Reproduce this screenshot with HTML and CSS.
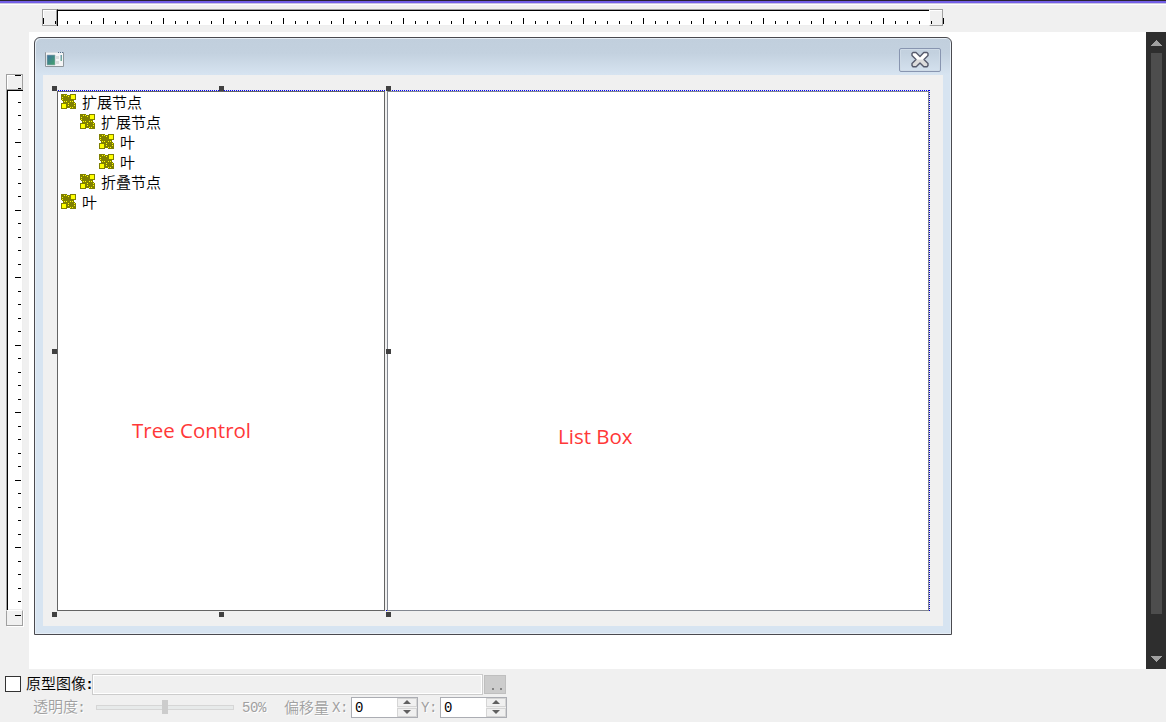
FILE: index.html
```html
<!DOCTYPE html>
<html lang="zh">
<head>
<meta charset="utf-8">
<title>Dialog Editor</title>
<link rel="stylesheet" href="styles.css">
</head>
<body>
<svg class="defs" width="0" height="0">
  <symbol id="node" viewBox="0 0 15 15">
    <path fill="#808000" d="M0 0h6v1h3V0h6v6h-2v2h1v1h1v6H9v-1H6v1H0V9h2V7H1V6H0z"/>
    <path fill="#ff0" d="M10 1h4v4h-4zM1 10h4v4H1zM3 1h1v1H3zM5 1h1v1H5zM1 3h1v1H1zM7 2h1v1H7zM1 5h1v1H1zM3 7h1v1H3zM5 7h1v1H5zM9 7h1v1H9zM11 7h1v1h-1zM7 9h1v1H7zM13 9h1v1h-1zM7 11h1v1H7zM13 11h1v1h-1zM9 13h1v1H9zM11 13h1v1h-1z"/>
  </symbol>
</svg>
<div class="editor">
  <div class="accent"></div>
  <div class="ruler-top">
    <div class="cap-left"></div><div class="track-h"></div><div class="cap-right"></div>
    <svg class="ticks-h" width="902" height="17" shape-rendering="crispEdges"><path d="M1 13.5H902" stroke="#000" stroke-width="3" stroke-dasharray="1 11"/><path d="M1 12H902" stroke="#000" stroke-width="6" stroke-dasharray="1 59"/></svg>
  </div>
  <div class="middle">
    <div class="ruler-left">
      <div class="cap-top"></div><div class="track-v"></div><div class="cap-bottom"></div>
      <svg class="ticks-v" width="17" height="552" shape-rendering="crispEdges"><path d="M14.5 1V541" stroke="#000" stroke-width="3" stroke-dasharray="1 12 1 13"/><path d="M13 1V548" stroke="#000" stroke-width="6" stroke-dasharray="1 66 1 67"/></svg>
    </div>
    <div class="canvas">
      <div class="dialog">
        <div class="titlebar">
          <svg class="app-icon" width="19" height="16" viewBox="0 0 19 16">
            <defs><linearGradient id="pic" x2="1" y2="1"><stop offset="0" stop-color="#3d6f9f"/><stop offset="1" stop-color="#43a56a"/></linearGradient></defs>
            <path d="M.5 .5h18v14H.5z" fill="#f4f5f6" stroke="#8f969c"/><path d="M1 .5h17" stroke="#d5dce2"/><path d="M13 .5h1m1 0h1m1 0h1" stroke="#526f8c"/>
            <path d="M2 3h8v10H2z" fill="url(#pic)" stroke="#9aabb6" stroke-width=".6"/><path d="M11 4h3v3h-3zM11 9h3v3h-3z" fill="#d9dcdd"/><path d="M15.5 3H17v6h-1.500z" fill="url(#pic)" opacity=".75"/>
          </svg>
          <div class="close"><svg width="20" height="18" viewBox="0 0 20 18"><defs><linearGradient id="cross" x2="0" y2="1"><stop offset=".45" stop-color="#fff"/><stop offset=".55" stop-color="#dcdcdc"/></linearGradient></defs><path d="M3 1.500h3L10 5.400l3.800-3.900H17l1 1v2L14 8.500l4 4v2l-1 1.200h-3.200L10 12l-3.800 3.700H3l-1-1.200v-2l4-4-4-4v-2z" fill="url(#cross)" stroke="#555a6c" stroke-width="1.400" stroke-linejoin="round"/></svg></div>
        </div>
        <div class="client">
          <div class="tree">
            <div class="row"><svg class="node"><use href="#node"/></svg><span>扩展节点</span></div>
            <div class="row level-1"><svg class="node"><use href="#node"/></svg><span>扩展节点</span></div>
            <div class="row level-2"><svg class="node"><use href="#node"/></svg><span>叶</span></div>
            <div class="row level-2"><svg class="node"><use href="#node"/></svg><span>叶</span></div>
            <div class="row level-1"><svg class="node"><use href="#node"/></svg><span>折叠节点</span></div>
            <div class="row"><svg class="node"><use href="#node"/></svg><span>叶</span></div>
            <span class="note note-tree">Tree Control</span>
          </div>
          <div class="list"><span class="note note-list">List Box</span></div>
          <svg class="selection" width="882" height="540" shape-rendering="crispEdges">
            <path d="M6 4.500H878" stroke="#00f" stroke-dasharray="1 1"/><path d="M877.500 4V525" stroke="#00c" stroke-dasharray="1 1"/><path d="M334 524.500h1" stroke="#00f"/>
            <path fill="#404040" d="M0 0h5v5H0zM167 0h5v5h-5zM334 0h5v5h-5zM0 263h5v5H0zM334 263h5v5h-5zM0 526h5v5H0zM167 526h5v5h-5zM334 526h5v5h-5z"/>
          </svg>
        </div>
      </div>
    </div>
    <div class="scrollbar">
      <svg width="11" height="6" shape-rendering="crispEdges"><path d="M5.500 0L11 6H0z" fill="#a0a0a0"/></svg>
      <div class="thumb"></div>
      <svg width="11" height="6" shape-rendering="crispEdges"><path d="M0 0h11L5.500 6z" fill="#a0a0a0"/></svg>
    </div>
  </div>
  <div class="options">
    <div class="line line-image">
      <span class="checkbox"></span><span class="label">原型图像<i class="colon">:</i></span><span class="path"></span><span class="browse"><b></b><b></b></span>
    </div>
    <div class="line line-opacity">
      <span class="dim opacity">透明度<i class="colon">:</i></span>
      <span class="slider"><span class="knob"></span></span>
      <span class="dim latin percent">50%</span>
      <span class="dim offset">偏移量</span><span class="dim latin x-label">X:</span>
      <span class="spin"><span class="latin">0</span><span class="arrows"><span><svg width="8" height="4"><path d="M4 0l4 4H0z"/></svg></span><span><svg width="8" height="4"><path d="M0 0h8L4 4z"/></svg></span></span></span>
      <span class="dim latin y-label">Y:</span>
      <span class="spin"><span class="latin">0</span><span class="arrows"><span><svg width="8" height="4"><path d="M4 0l4 4H0z"/></svg></span><span><svg width="8" height="4"><path d="M0 0h8L4 4z"/></svg></span></span></span>
    </div>
  </div>
</div>
</body>
</html>
```
FILE: styles.css
```css
* { box-sizing: border-box; }
body { margin: 0; background: #f0f0f0; color: #000; font: 350 15px/20px "Noto Sans CJK SC", sans-serif; overflow: hidden; }
svg { display: block; flex: none; }
.defs { position: absolute; }
.editor { width: 1166px; height: 722px; display: grid; grid-template-rows: 4px 28px 637px 53px; }
.accent { background: linear-gradient(#282334 0 1px, #735fe6 1px 3px, #c9c6e0 3px 4px); }

.ruler-top { position: relative; display: flex; height: 22px; padding: 4px 0 0 42px; border-top: 1px solid #fff; }
.cap-left { width: 15px; height: 17px; border: 1px solid #a0a0a0; box-shadow: inset 1px 1px #fff; }
.track-h { width: 872px; height: 17px; background: #fff; border-top: 1px solid #a0a0a0; border-left: 1px solid #000; box-shadow: inset 0 1px #000, inset 0 -1px #eee; }
.cap-right { width: 14px; height: 17px; border: 1px solid #a0a0a0; border-left-color: #fff; box-shadow: inset 0 1px #fff; }
.ticks-h { position: absolute; left: 42px; top: 4px; }

.middle { display: grid; grid-template-columns: 29px 1117px 20px; }
.ruler-left { position: relative; padding: 42px 0 0 6px; }
.cap-top { width: 17px; height: 16px; border: 1px solid #a0a0a0; box-shadow: inset 1px 1px #fff; }
.track-v { width: 17px; height: 520px; background: #fff; border-left: 1px solid #a0a0a0; box-shadow: inset 1px 1px #000, inset -1px -1px #eee; }
.cap-bottom { width: 17px; height: 16px; border: 1px solid #a0a0a0; border-top-color: #fff; box-shadow: 1px 1px #fff; }
.ticks-v { position: absolute; left: 5px; top: 42px; }

.canvas { background: #fff; padding: 5px 0 0 5px; }
.dialog { width: 918px; height: 598px; padding: 0 8px; border: 1px solid #4a4a4f; border-radius: 6px 6px 0 0; background: linear-gradient(#c1cfdd 0, #c3d1df 15px, #d7e4f1 37px); box-shadow: inset 1px 1px #e6eef6, inset -1px -1px #e6eef6; }
.titlebar { height: 37px; display: flex; justify-content: space-between; align-items: flex-start; padding: 10px 2px 0; }
.app-icon { margin-top: 4px; }
.close { width: 42px; height: 24px; display: flex; align-items: center; justify-content: center; border: 1px solid #8895b0; border-radius: 2px; box-shadow: inset 0 0 0 1px #cfdbe7; }
.client { position: relative; height: 551px; display: flex; gap: 2px; padding: 16px 0 0 14px; background: #f0f0f0; }
.tree { position: relative; width: 328px; height: 520px; background: #fff; border: 1px solid #646464; padding: 0 3px; }
.list { position: relative; width: 542px; height: 520px; background: #fff; border: 1px solid #828790; }
.row { height: 20px; display: flex; align-items: center; gap: 6px; line-height: 20px; }
.row span { margin-bottom: 1px; }
.level-1 { padding-left: 19px; }
.level-2 { padding-left: 38px; }
.node { width: 15px; height: 15px; margin-bottom: 1px; shape-rendering: crispEdges; }
.selection { position: absolute; left: 9px; top: 11px; }
.note { position: absolute; color: #ff3838; font: 400 20.5px/28px "Open Sans", "Noto Sans", sans-serif; white-space: nowrap; }
.note-tree { left: 74px; top: 324px; }
.note-list { left: 170px; top: 330px; }

.scrollbar { background: #2e2e2e; display: flex; flex-direction: column; align-items: center; padding-top: 8px; }
.thumb { width: 11px; height: 561px; margin: 7px 0 42px; background: #4d4d4d; }

.options { padding-top: 4px; }
.line { display: flex; align-items: center; }
.line-image { height: 22px; padding-left: 5px; }
.checkbox { width: 16px; height: 16px; border: 1px solid #333; background: #fff; margin-right: 5px; }
.label { width: 66px; white-space: nowrap; }
.colon { font: bold 15px/20px "Liberation Mono", monospace; margin-left: -1px; }
.path { width: 391px; height: 21px; border: 1px solid #ccc; box-shadow: inset 0 0 0 1px #fff; }
.browse { width: 22px; height: 19px; margin-left: 1px; border: 1px solid #bfbfbf; background: #ccc; display: flex; gap: 6px; padding: 12px 0 0 7px; }
.browse b { width: 2px; height: 2px; background: #838383; }
.line-opacity { height: 24px; padding-left: 33px; }
.dim { color: #a0a0a0; text-shadow: 1px 1px #fff; white-space: nowrap; }
.latin { font: 400 14px/20px "Liberation Mono", monospace; letter-spacing: -.4px; }
.opacity { width: 63px; }
.opacity .colon { font-weight: normal; }
.slider { width: 138px; height: 5px; border: 1px solid #d6d6d6; background: #e7eaea; }
.knob { display: block; width: 6px; height: 14px; margin: -6px 0 0 65px; background: #ccc; }
.percent { width: 42px; margin-left: 8px; padding-top: 2px; }
.offset { width: 48px; }
.x-label { width: 19px; padding-top: 2px; }
.y-label { width: 19px; margin-left: 3px; padding-top: 2px; }
.spin { width: 67px; height: 21px; display: flex; border: 1px solid #abadb3; background: #fff; padding-left: 3px; justify-content: space-between; }
.spin > .latin { font-size: 14px; line-height: 21px; }
.arrows { width: 20px; display: grid; grid-template-rows: 1fr 1fr; gap: 1px; background: #f0f0f0; }
.arrows span { display: flex; align-items: center; justify-content: center; border: 1px solid #d5d5d5; }
.arrows path { fill: #606060; }
```
